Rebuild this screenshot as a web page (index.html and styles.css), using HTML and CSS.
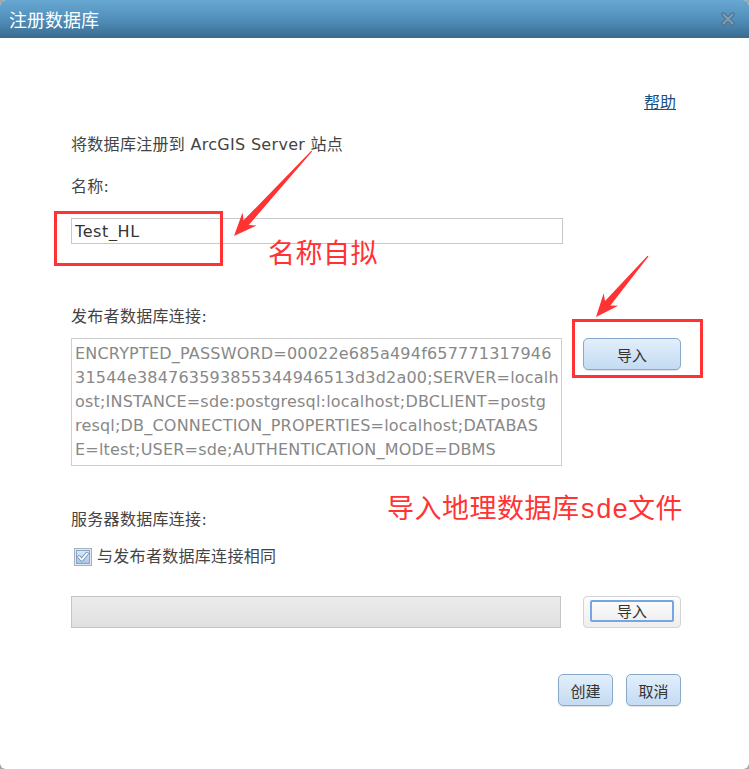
FILE: index.html
```html
<!DOCTYPE html>
<html>
	<head>
		<meta charset="utf-8">
		<title>注册数据库</title>
		<link rel="stylesheet" href="styles.css">
	</head>
	<body>
		<div class="dialog">
			<div class="titlebar">
				<span class="title">注册数据库</span>
				<svg class="close" width="14" height="14" viewBox="0 0 14 14">
					<path d="M2.5 2.5 L11.5 11.5 M11.5 2.5 L2.5 11.5" stroke="#4f6f88" stroke-width="4.2" stroke-linecap="round"/>
					<path d="M2.5 2.5 L11.5 11.5 M11.5 2.5 L2.5 11.5" stroke="#7f9db5" stroke-width="2.2" stroke-linecap="round"/>
				</svg>
			</div>

			<div class="content">
				<div class="help-row"><a href="#" class="help">帮助</a></div>
				<p class="intro">将数据库注册到 ArcGIS Server 站点</p>

				<p class="label label-name">名称:</p>
				<input class="name-input" type="text" value="Test_HL">

				<p class="label label-pub">发布者数据库连接:</p>
				<div class="conn-row">
					<div class="conn-box">ENCRYPTED_PASSWORD=00022e685a494f657771317946<br>31544e384763593855344946513d3d2a00;SERVER=localh<br>ost;INSTANCE=sde:postgresql:localhost;DBCLIENT=postg<br>resql;DB_CONNECTION_PROPERTIES=localhost;DATABAS<br>E=ltest;USER=sde;AUTHENTICATION_MODE=DBMS</div>
					<button class="btn btn-import">导入</button>
				</div>

				<p class="label label-server">服务器数据库连接:</p>
				<label class="check-row">
					<svg class="check" width="18" height="18" viewBox="0 0 18 18">
						<defs>
							<linearGradient id="cbg" x1="0" y1="0" x2="0" y2="1">
								<stop offset="0" stop-color="#dde9f5"/>
								<stop offset="1" stop-color="#a9c4e2"/>
							</linearGradient>
						</defs>
						<rect x="0.5" y="0.5" width="17" height="17" fill="#e3e9f0" stroke="#a3b2c2"/>
						<rect x="2.5" y="2.5" width="13" height="13" fill="url(#cbg)" stroke="#8aa3bf"/>
						<path d="M5 9 L7.8 11.8 L13 5.6" fill="none" stroke="#5f88b5" stroke-width="3.4" stroke-linecap="round" stroke-linejoin="round"/>
						<path d="M5 9 L7.8 11.8 L13 5.6" fill="none" stroke="#ffffff" stroke-width="1.9" stroke-linecap="round" stroke-linejoin="round"/>
					</svg>
					<span>与发布者数据库连接相同</span>
				</label>

				<div class="server-row">
					<div class="server-field"></div>
					<button class="btn-plain"><span class="focus-ring">导入</span></button>
				</div>

				<div class="actions">
					<button class="btn btn-small">创建</button>
					<button class="btn btn-small">取消</button>
				</div>
			</div>

			<!-- 标注 -->
			<div class="mark mark-name"></div>
			<div class="mark mark-import"></div>
			<span class="note note-name">名称自拟</span>
			<span class="note note-import">导入地理数据库<span class="note-latin">sde</span>文件</span>
			<svg class="arrows" width="749" height="769">
				<g transform="translate(234 236) rotate(132.5)" fill="#f33">
					<polygon points="0,0 -23,-9.5 -18,-3.5 -115,-0.6 -115,0.6 -18,3.5 -23,9.5"/>
				</g>
				<g transform="translate(596 317) rotate(130.5)" fill="#f33">
					<polygon points="0,0 -23,-9.5 -18,-3.5 -80,-0.6 -80,0.6 -18,3.5 -23,9.5"/>
				</g>
			</svg>
		</div>
	</body>
</html>
```

FILE: styles.css
```css
*{
	margin: 0;
	padding: 0;
	box-sizing: border-box;
}
body{
	background: #a9a49f;
	font-family: "DejaVu Sans", "Noto Sans CJK SC", sans-serif;
	font-size: 16px;
	letter-spacing: 0.3px;
	color: #444;
}
.dialog{
	width: 749px;
	height: 769px;
	background: #fff;
	border-radius: 6px;
	overflow: hidden;
	position: relative;
}
.titlebar{
	height: 38px;
	display: flex;
	align-items: center;
	justify-content: space-between;
	padding: 0 14px 0 9px;
	background: linear-gradient(#67a8d2, #4f8db8 55%, #3a6a8e);
}
.title{
	font-family: "Noto Sans CJK SC", sans-serif;
	font-size: 18px;
	line-height: 24px;
	letter-spacing: 0;
	color: #fff;
	margin-top: -1px;
}
.close{
	display: block;
}
.content{
	padding: 0 68px 0 71px;
}
.help-row{
	margin-top: 55px;
	text-align: right;
	line-height: 20px;
	padding-right: 5px;
}
.help{
	color: #1d4f82;
	text-decoration: underline;
	font-size: 16px;
	letter-spacing: 0;
}
.intro,
.label{
	line-height: 20px;
	color: #444;
}
.intro{
	margin-top: 22px;
}
.label-name{
	margin-top: 22px;
}
.name-input{
	display: block;
	margin-top: 21px;
	width: 492px;
	height: 26px;
	border: 1px solid #c8c8c8;
	padding: 0 3px;
	font-family: inherit;
	font-size: 16px;
	letter-spacing: 0.6px;
	color: #333;
	outline: none;
}
.label-pub{
	margin-top: 63px;
}
.conn-row{
	display: flex;
	align-items: flex-start;
	gap: 21px;
	margin-top: 11px;
}
.conn-box{
	width: 491px;
	height: 128px;
	border: 1px solid #cfcfcf;
	padding: 3px 0 3px 3px;
	line-height: 24px;
	letter-spacing: 0.2px;
	color: #888;
	white-space: nowrap;
	overflow: hidden;
}
.btn{
	font-family: "Noto Sans CJK SC", sans-serif;
	font-size: 15px;
	color: #333;
	border: 1px solid #86a9cc;
	border-radius: 5px;
	background: linear-gradient(#e3effb, #c4dbf3);
	box-shadow: 0 1px 1px rgba(0,0,0,0.12);
	cursor: pointer;
}
.btn-import{
	width: 98px;
	height: 32px;
}
.label-server{
	margin-top: 44px;
}
.check-row{
	display: flex;
	align-items: center;
	gap: 5px;
	margin-top: 17px;
	padding-left: 3px;
	line-height: 20px;
}
.check{
	display: block;
}
.server-row{
	display: flex;
	gap: 22px;
	margin-top: 29px;
}
.server-field{
	width: 490px;
	height: 32px;
	border: 1px solid #c4c4c4;
	background: linear-gradient(#ececec, #e0e0e0);
}
.btn-plain{
	width: 98px;
	height: 32px;
	border: 1px solid #d3d3d3;
	border-radius: 4px;
	background: linear-gradient(#fdfdfd, #eeeeee);
	padding: 3px 6px 5px 6px;
	display: flex;
}
.focus-ring{
	flex: 1;
	border: 2px solid #77a4e2;
	border-radius: 2px;
	font-family: "Noto Sans CJK SC", sans-serif;
	font-size: 15px;
	line-height: 18px;
	color: #333;
	background: linear-gradient(#fbfbfb, #f0f0f0);
}
.actions{
	display: flex;
	justify-content: flex-end;
	gap: 13px;
	margin-top: 46px;
}
.btn-small{
	width: 55px;
	height: 32px;
}

/* 红色标注 */
.mark{
	position: absolute;
	border: 3px solid #f33;
}
.mark-name{
	left: 54px;
	top: 211px;
	width: 169px;
	height: 55px;
}
.mark-import{
	left: 572px;
	top: 319px;
	width: 131px;
	height: 59px;
}
.note{
	position: absolute;
	font-family: "Noto Sans CJK SC", serif;
	font-size: 27px;
	line-height: 30px;
	letter-spacing: 0.5px;
	color: #f33;
	white-space: nowrap;
}
.note-latin{
	font-family: "Liberation Mono", monospace;
	letter-spacing: 0;
}
.note-name{
	left: 268px;
	top: 237px;
}
.note-import{
	left: 387px;
	top: 492px;
}
.arrows{
	position: absolute;
	left: 0;
	top: 0;
	pointer-events: none;
}
```
